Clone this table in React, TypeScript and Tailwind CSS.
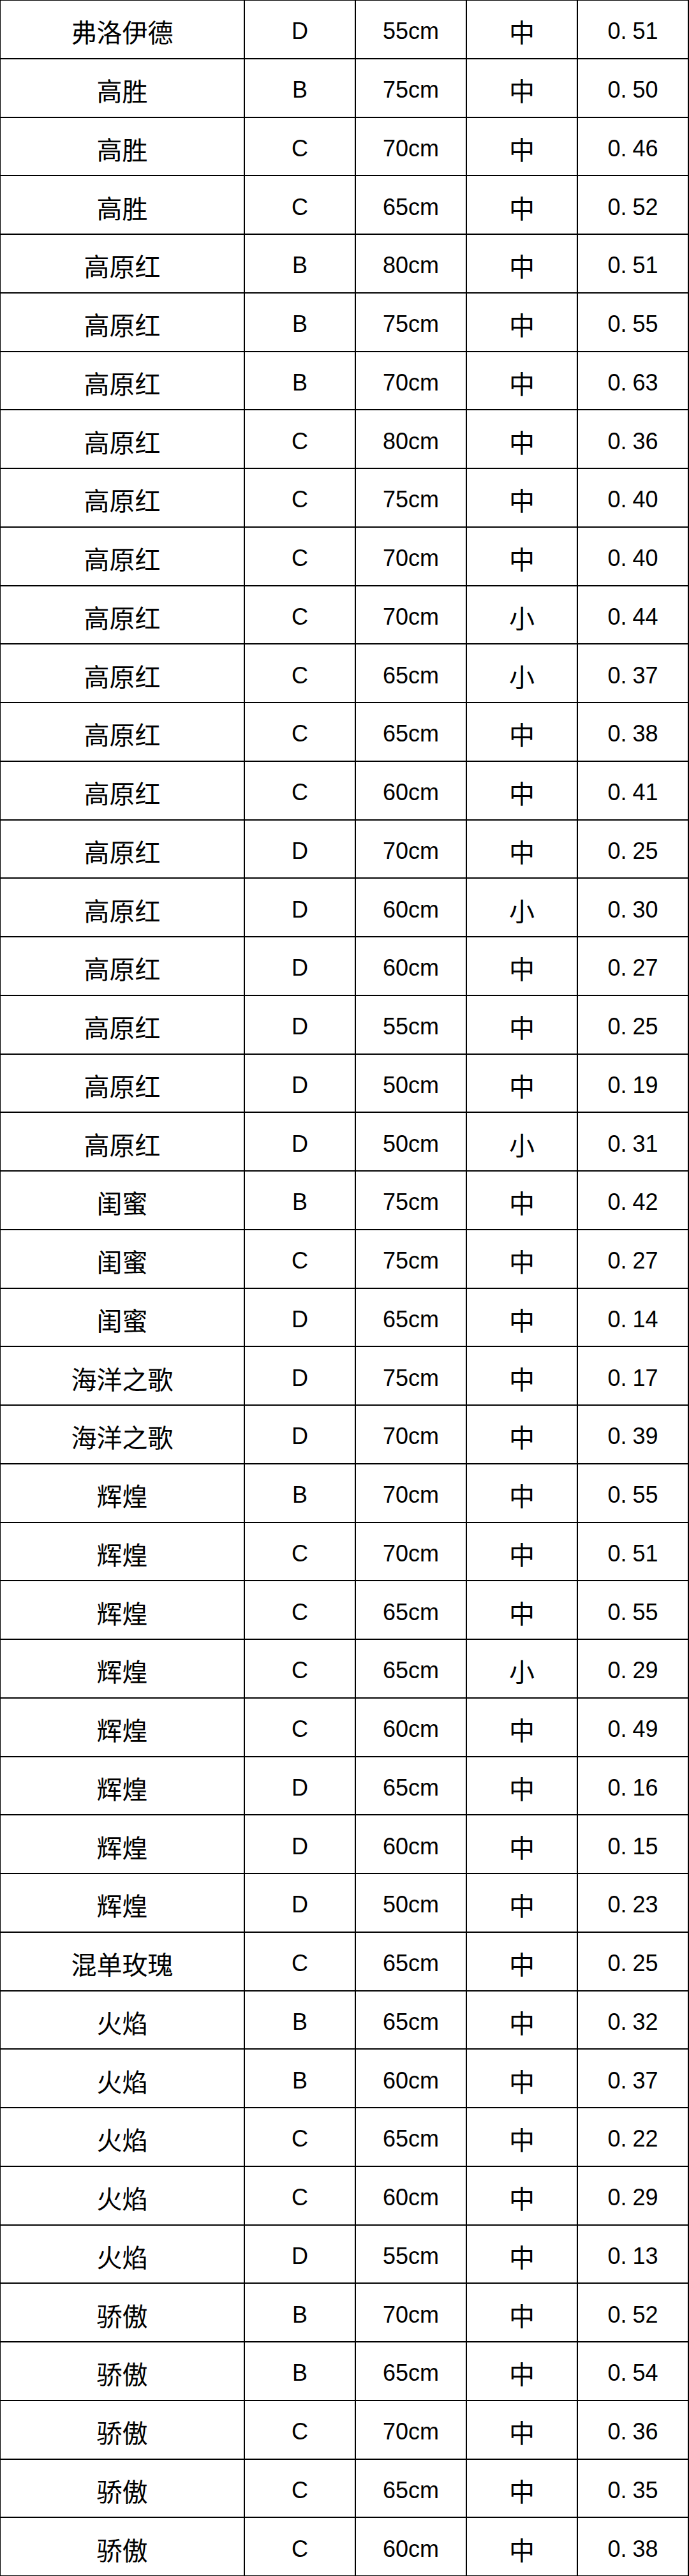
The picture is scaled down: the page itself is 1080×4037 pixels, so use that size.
const rows: [string, string, string, string, string][] = [
  ["弗洛伊德", "D", "55cm", "中", "0.51"],
  ["高胜", "B", "75cm", "中", "0.50"],
  ["高胜", "C", "70cm", "中", "0.46"],
  ["高胜", "C", "65cm", "中", "0.52"],
  ["高原红", "B", "80cm", "中", "0.51"],
  ["高原红", "B", "75cm", "中", "0.55"],
  ["高原红", "B", "70cm", "中", "0.63"],
  ["高原红", "C", "80cm", "中", "0.36"],
  ["高原红", "C", "75cm", "中", "0.40"],
  ["高原红", "C", "70cm", "中", "0.40"],
  ["高原红", "C", "70cm", "小", "0.44"],
  ["高原红", "C", "65cm", "小", "0.37"],
  ["高原红", "C", "65cm", "中", "0.38"],
  ["高原红", "C", "60cm", "中", "0.41"],
  ["高原红", "D", "70cm", "中", "0.25"],
  ["高原红", "D", "60cm", "小", "0.30"],
  ["高原红", "D", "60cm", "中", "0.27"],
  ["高原红", "D", "55cm", "中", "0.25"],
  ["高原红", "D", "50cm", "中", "0.19"],
  ["高原红", "D", "50cm", "小", "0.31"],
  ["闺蜜", "B", "75cm", "中", "0.42"],
  ["闺蜜", "C", "75cm", "中", "0.27"],
  ["闺蜜", "D", "65cm", "中", "0.14"],
  ["海洋之歌", "D", "75cm", "中", "0.17"],
  ["海洋之歌", "D", "70cm", "中", "0.39"],
  ["辉煌", "B", "70cm", "中", "0.55"],
  ["辉煌", "C", "70cm", "中", "0.51"],
  ["辉煌", "C", "65cm", "中", "0.55"],
  ["辉煌", "C", "65cm", "小", "0.29"],
  ["辉煌", "C", "60cm", "中", "0.49"],
  ["辉煌", "D", "65cm", "中", "0.16"],
  ["辉煌", "D", "60cm", "中", "0.15"],
  ["辉煌", "D", "50cm", "中", "0.23"],
  ["混单玫瑰", "C", "65cm", "中", "0.25"],
  ["火焰", "B", "65cm", "中", "0.32"],
  ["火焰", "B", "60cm", "中", "0.37"],
  ["火焰", "C", "65cm", "中", "0.22"],
  ["火焰", "C", "60cm", "中", "0.29"],
  ["火焰", "D", "55cm", "中", "0.13"],
  ["骄傲", "B", "70cm", "中", "0.52"],
  ["骄傲", "B", "65cm", "中", "0.54"],
  ["骄傲", "C", "70cm", "中", "0.36"],
  ["骄傲", "C", "65cm", "中", "0.35"],
  ["骄傲", "C", "60cm", "中", "0.38"],
];

const cell =
  "flex items-center justify-center border-r-2 border-b-2 border-black pt-[7px] text-black";
const cjk = "text-[40px] [font-family:'Noto_Sans_CJK_SC','Noto_Sans_CJK_SC',sans-serif]";
const latin =
  "text-[36px] [font-family:'Liberation_Sans','Noto_Sans_CJK_SC',sans-serif]";

function Ratio({ v }: { v: string }) {
  const [a, b] = v.split(".");
  return (
    <span>
      {a}
      <span className="mr-[9px]">.</span>
      {b}
    </span>
  );
}

export default function App() {
  return (
    <div className="w-[1080px] bg-white">
      <div className="grid grid-cols-[383px_174px_174px_174px_174px] auto-rows-[91.75px] border-l border-t border-black">
        {rows.map((r, i) => (
          <div key={i} className="contents">
            <div className={`${cell} ${cjk}`}>{r[0]}</div>
            <div className={`${cell} ${latin}`}>{r[1]}</div>
            <div className={`${cell} ${latin}`}>{r[2]}</div>
            <div className={`${cell} ${cjk}`}>{r[3]}</div>
            <div className={`${cell} ${latin}`}>
              <Ratio v={r[4]} />
            </div>
          </div>
        ))}
      </div>
    </div>
  );
}
